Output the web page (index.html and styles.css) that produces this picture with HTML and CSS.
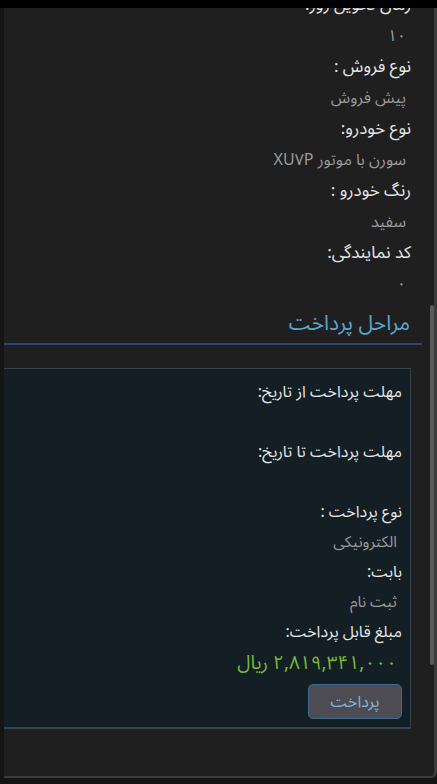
FILE: index.html
```html
<!DOCTYPE html>
<html lang="fa" dir="rtl">
<head>
<meta charset="utf-8">
<title>مراحل پرداخت</title>
<link rel="stylesheet" href="styles.css">
</head>
<body>
<div class="topbar"></div>
<div class="frame">
  <div class="scroll-thumb"></div>
  <div class="panel">
    <dl class="details">
      <dt>زمان تحویل روز:</dt>
      <dd>۱۰</dd>
      <dt>نوع فروش :</dt>
      <dd>پیش فروش</dd>
      <dt>نوع خودرو:</dt>
      <dd>سورن با موتور XU۷P</dd>
      <dt>رنگ خودرو :</dt>
      <dd>سفید</dd>
      <dt>کد نمایندگی:</dt>
      <dd>۰</dd>
    </dl>
    <h2 class="section-title">مراحل پرداخت</h2>
    <div class="card">
      <dl class="details card-details">
        <dt>مهلت پرداخت از تاریخ:</dt>
        <dd class="empty"></dd>
        <dt>مهلت پرداخت تا تاریخ:</dt>
        <dd class="empty"></dd>
        <dt>نوع پرداخت :</dt>
        <dd>الکترونیکی</dd>
        <dt>بابت:</dt>
        <dd>ثبت نام</dd>
        <dt>مبلغ قابل پرداخت:</dt>
        <dd class="amount">۲,۸۱۹,۳۴۱,۰۰۰ ریال</dd>
      </dl>
      <button class="pay-btn" type="button">پرداخت</button>
    </div>
  </div>
</div>
</body>
</html>
```
FILE: styles.css
```css
html, body {
  margin: 0;
  padding: 0;
}
body {
  background: #141414;
  font-family: "Noto Sans Arabic", "Noto Naskh Arabic", "Vazirmatn", "DejaVu Sans", sans-serif;
  direction: rtl;
  height: 784px;
  overflow: hidden;
}
.topbar {
  height: 8px;
  background: #000;
}
.frame {
  position: relative;
  width: 430px;
  height: 768px;
  background: #1f1f1f;
  border-right: 3px solid #3c3c3c;
  border-bottom: 2px solid #3c3c3c;
  border-bottom-right-radius: 6px;
  overflow: hidden;
}
.scroll-thumb {
  position: absolute;
  right: 0;
  top: 297px;
  width: 4px;
  height: 360px;
  background: #5a5a5a;
  border-radius: 2px;
}
.panel {
  padding-right: 12px;
}
.details {
  margin: -18px 0 0 0;
  padding-right: 11px;
}
.details dt {
  margin: 0;
  font-size: 17px;
  line-height: 31px;
  height: 31px;
  color: #e6e6e6;
}
.details dd {
  margin: 0;
  padding-right: 5px;
  font-size: 16px;
  line-height: 31px;
  height: 31px;
  color: #9a9a9a;
}
.section-title {
  margin: 8px 0 0 0;
  padding: 0 12px 5px 0;
  font-size: 21px;
  font-weight: normal;
  line-height: 30px;
  height: 30px;
  color: #5aa6d2;
  border-bottom: 2px solid #2b4775;
}
.card {
  margin: 23px 11px 0 -4px;
  padding: 8px 8px 8px 0;
  background: #141e25;
  border: 1px solid #34444c;
  border-bottom-width: 2px;
  display: flex;
  flex-direction: column;
  align-items: flex-start;
}
.card-details {
  margin: 0;
  padding-right: 0;
  align-self: stretch;
}
.card-details dt {
  font-size: 16px;
}
.card-details dt,
.card-details dd {
  line-height: 30px;
  height: 30px;
}
.card-details dd {
  font-size: 15.5px;
}
.card-details dd.amount {
  font-size: 19px;
  line-height: 32px;
  color: #76b83a;
}
.pay-btn {
  margin-top: 7px;
  width: 94px;
  height: 35px;
  background: #4d4c52;
  border: 1px solid #3c6a90;
  border-radius: 5px;
  color: #7db7dc;
  font-family: inherit;
  font-size: 16px;
  padding: 0;
}
```
